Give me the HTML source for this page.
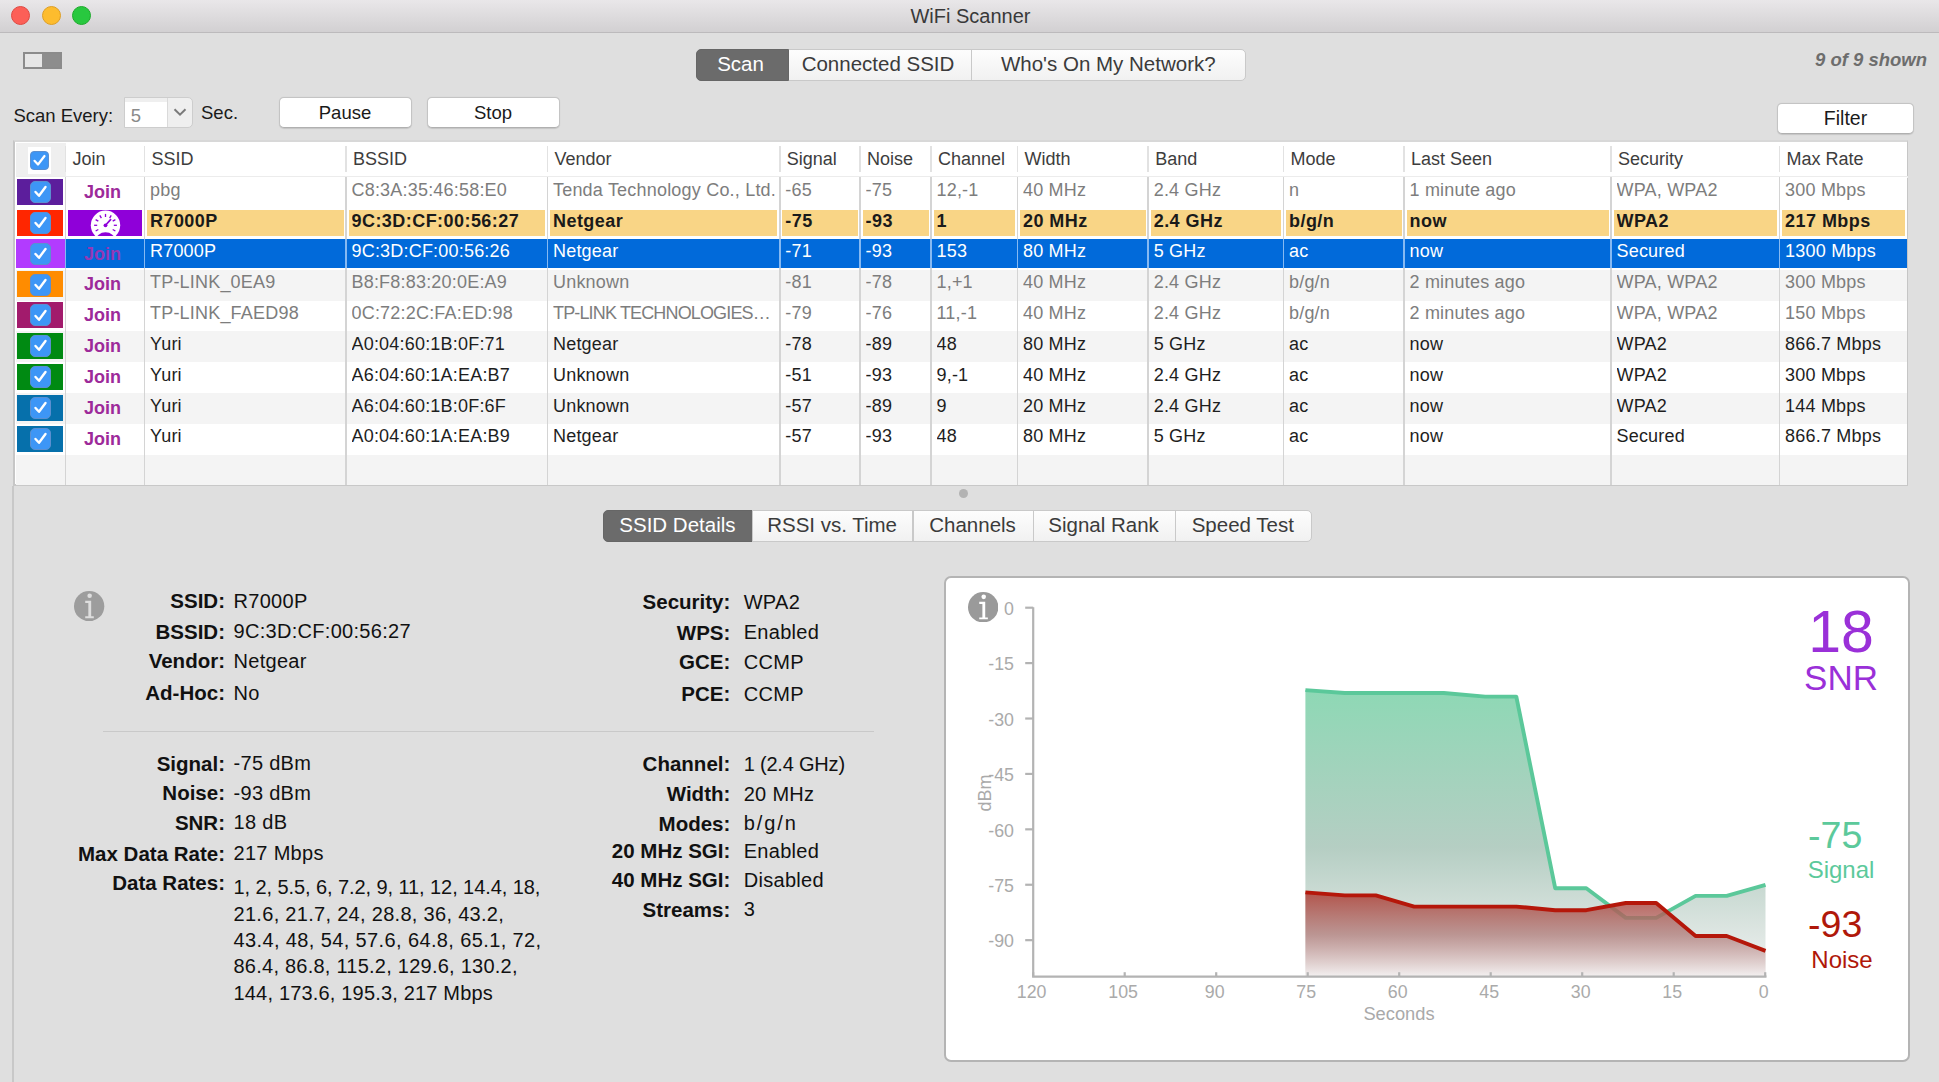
<!DOCTYPE html>
<html><head><meta charset="utf-8">
<style>
*{box-sizing:border-box;margin:0;padding:0}
html,body{width:1939px;height:1082px;overflow:hidden;background:#dfdfdf;font-family:"Liberation Sans",sans-serif;color:#1a1a1a}
.a{position:absolute;white-space:nowrap}
.b{position:absolute}
#titlebar{position:absolute;left:0;top:0;width:1939px;height:33px;background:linear-gradient(#e9e7e9,#d2d0d2);border-bottom:1.5px solid #bcbabc}
.tl{position:absolute;top:6px;width:19px;height:19px;border-radius:50%}
.seg{position:absolute;height:32px;border:1px solid #c9c9c9;background:linear-gradient(#fdfdfd,#f1f1f1)}
.seg.on{background:#6b6b6b;border-color:#666}
.btn{position:absolute;height:31px;border:1px solid #c4c4c4;border-bottom-color:#b0b0b0;background:#fff;border-radius:5px;box-shadow:0 0.5px 1px rgba(0,0,0,0.12)}
.cb{position:absolute;width:21px;height:21px;border-radius:5px;background:#3d96f6;border:1px solid #5b8fd0}
.vd{position:absolute;width:1.5px;background:#d2d2d2}
</style></head><body>

<div id="titlebar">
<div class="tl" style="left:11px;background:#fc5f57;border:1px solid #df4942"></div>
<div class="tl" style="left:41.5px;background:#fdbc2e;border:1px solid #de9f24"></div>
<div class="tl" style="left:72px;background:#28c83f;border:1px solid #1eaa2c"></div>
</div>
<div class="a" style="left:670.50px;width:600px;text-align:center;top:3.67px;font-size:20px;line-height:25px;color:#393939;">WiFi Scanner</div>
<div class="b" style="left:23px;top:52px;width:39px;height:17px;border:2px solid #8b8b8b;background:linear-gradient(90deg,#e6e6e6 0,#e6e6e6 50%,#8d8d8d 50%)"></div>
<div class="seg on" style="left:696px;top:49px;width:93px;height:32px;border-radius:5px 0 0 5px"></div>
<div class="seg" style="left:788.5px;top:49px;width:183px;height:32px;border-left:none"></div>
<div class="seg" style="left:970.5px;top:49px;width:275px;height:32px;border-radius:0 5px 5px 0"></div>
<div class="a" style="left:440.50px;width:600px;text-align:center;top:51.30px;font-size:20.5px;line-height:26px;color:#fff;">Scan</div>
<div class="a" style="left:578.00px;width:600px;text-align:center;top:51.10px;font-size:20.5px;line-height:26px;color:#3b3b3b;">Connected SSID</div>
<div class="a" style="left:808.30px;width:600px;text-align:center;top:51.10px;font-size:20.5px;line-height:26px;color:#3b3b3b;">Who's On My Network?</div>
<div class="a" style="right:12.00px;top:48.39px;font-size:18.5px;line-height:23px;font-weight:bold;color:#6d6d6d;font-style:italic;">9 of 9 shown</div>
<div class="a" style="left:13.40px;top:103.59px;font-size:18.5px;line-height:23px;">Scan Every:</div>
<div class="b" style="left:124px;top:97px;width:69px;height:31px;border:1px solid #cdcdcd;border-radius:0 5px 5px 0;background:#efefef"></div>
<div class="b" style="left:125px;top:102px;width:41.5px;height:25px;background:#fff"></div>
<div class="b" style="left:166.5px;top:98px;width:1px;height:29px;background:#dadada"></div>
<div class="a" style="left:130.70px;top:103.59px;font-size:18.5px;line-height:23px;color:#8a8a8a;">5</div>
<svg class="a" style="left:172px;top:106px" width="16" height="12"><path d="M2.5 3.2 L8 8.6 L13.5 3.2" fill="none" stroke="#7a7a7a" stroke-width="2"/></svg>
<div class="a" style="left:201.00px;top:100.89px;font-size:18.5px;line-height:23px;">Sec.</div>
<div class="btn" style="left:278.5px;top:96.5px;width:133px;height:31px"></div>
<div class="btn" style="left:426.5px;top:96.5px;width:133px;height:31px"></div>
<div class="btn" style="left:1777px;top:103px;width:137px;height:30.5px"></div>
<div class="a" style="left:45.00px;width:600px;text-align:center;top:100.69px;font-size:18.5px;line-height:23px;">Pause</div>
<div class="a" style="left:193.00px;width:600px;text-align:center;top:100.69px;font-size:18.5px;line-height:23px;">Stop</div>
<div class="a" style="left:1545.50px;width:600px;text-align:center;top:105.84px;font-size:19.5px;line-height:24px;">Filter</div>
<div class="b" style="left:13px;top:140.3px;width:1895px;height:345.7px;background:#fff;border-left:2.8px solid #c6c6c6;border-top:2px solid #d8d8d8;border-bottom:2px solid #c8c8c8;border-right:1.5px solid #c6c6c6"></div>
<div class="b" style="left:16px;top:143px;width:49.5px;height:33px;background:#efefef"></div>
<div class="b" style="left:28px;top:147px;width:23px;height:27px;background:#fff"></div>
<div class="cb" style="left:29.5px;top:151px;width:19px;height:19px;border-radius:4px"></div>
<svg class="a" style="left:29.5px;top:151px" width="19" height="19"><path d="M4.5 9.8 L8 13.5 L14.5 5" fill="none" stroke="#fff" stroke-width="2.2" stroke-linecap="round" stroke-linejoin="round"/></svg>
<div class="b" style="left:16px;top:176px;width:1892px;height:1.5px;background:#ececec"></div>
<div class="b" style="left:16px;top:177.10px;width:1890.5px;height:30.86px;background:#ffffff"></div>
<div class="b" style="left:16px;top:207.96px;width:1890.5px;height:30.86px;background:#ffffff"></div>
<div class="b" style="left:16px;top:238.82px;width:1890.5px;height:30.86px;background:#ffffff"></div>
<div class="b" style="left:16px;top:239.22px;width:1890.5px;height:28.66px;background:#016ada"></div>
<div class="b" style="left:16px;top:269.68px;width:1890.5px;height:30.86px;background:#f4f4f4"></div>
<div class="b" style="left:16px;top:300.54px;width:1890.5px;height:30.86px;background:#ffffff"></div>
<div class="b" style="left:16px;top:331.40px;width:1890.5px;height:30.86px;background:#f4f4f4"></div>
<div class="b" style="left:16px;top:362.26px;width:1890.5px;height:30.86px;background:#ffffff"></div>
<div class="b" style="left:16px;top:393.12px;width:1890.5px;height:30.86px;background:#f4f4f4"></div>
<div class="b" style="left:16px;top:423.98px;width:1890.5px;height:30.86px;background:#ffffff"></div>
<div class="b" style="left:16px;top:454.84px;width:1890.5px;height:30.16px;background:#f4f4f4"></div>
<div class="vd" style="left:64.75px;top:177px;height:308px;background:#d4d4d4"></div>
<div class="vd" style="left:64.75px;top:146px;height:26px;background:#e2e2e2"></div>
<div class="vd" style="left:143.75px;top:177px;height:308px;background:#d4d4d4"></div>
<div class="vd" style="left:143.75px;top:146px;height:26px;background:#e2e2e2"></div>
<div class="vd" style="left:345.25px;top:177px;height:308px;background:#d4d4d4"></div>
<div class="vd" style="left:345.25px;top:146px;height:26px;background:#e2e2e2"></div>
<div class="vd" style="left:546.75px;top:177px;height:308px;background:#d4d4d4"></div>
<div class="vd" style="left:546.75px;top:146px;height:26px;background:#e2e2e2"></div>
<div class="vd" style="left:779.00px;top:177px;height:308px;background:#d4d4d4"></div>
<div class="vd" style="left:779.00px;top:146px;height:26px;background:#e2e2e2"></div>
<div class="vd" style="left:859.25px;top:177px;height:308px;background:#d4d4d4"></div>
<div class="vd" style="left:859.25px;top:146px;height:26px;background:#e2e2e2"></div>
<div class="vd" style="left:930.25px;top:177px;height:308px;background:#d4d4d4"></div>
<div class="vd" style="left:930.25px;top:146px;height:26px;background:#e2e2e2"></div>
<div class="vd" style="left:1016.75px;top:177px;height:308px;background:#d4d4d4"></div>
<div class="vd" style="left:1016.75px;top:146px;height:26px;background:#e2e2e2"></div>
<div class="vd" style="left:1147.45px;top:177px;height:308px;background:#d4d4d4"></div>
<div class="vd" style="left:1147.45px;top:146px;height:26px;background:#e2e2e2"></div>
<div class="vd" style="left:1282.75px;top:177px;height:308px;background:#d4d4d4"></div>
<div class="vd" style="left:1282.75px;top:146px;height:26px;background:#e2e2e2"></div>
<div class="vd" style="left:1403.25px;top:177px;height:308px;background:#d4d4d4"></div>
<div class="vd" style="left:1403.25px;top:146px;height:26px;background:#e2e2e2"></div>
<div class="vd" style="left:1610.25px;top:177px;height:308px;background:#d4d4d4"></div>
<div class="vd" style="left:1610.25px;top:146px;height:26px;background:#e2e2e2"></div>
<div class="vd" style="left:1778.85px;top:177px;height:308px;background:#d4d4d4"></div>
<div class="vd" style="left:1778.85px;top:146px;height:26px;background:#e2e2e2"></div>
<div class="vd" style="left:64.75px;top:239.22px;height:28.66px;background:#86b9f2"></div>
<div class="vd" style="left:143.75px;top:239.22px;height:28.66px;background:#86b9f2"></div>
<div class="vd" style="left:345.25px;top:239.22px;height:28.66px;background:#86b9f2"></div>
<div class="vd" style="left:546.75px;top:239.22px;height:28.66px;background:#86b9f2"></div>
<div class="vd" style="left:779.00px;top:239.22px;height:28.66px;background:#86b9f2"></div>
<div class="vd" style="left:859.25px;top:239.22px;height:28.66px;background:#86b9f2"></div>
<div class="vd" style="left:930.25px;top:239.22px;height:28.66px;background:#86b9f2"></div>
<div class="vd" style="left:1016.75px;top:239.22px;height:28.66px;background:#86b9f2"></div>
<div class="vd" style="left:1147.45px;top:239.22px;height:28.66px;background:#86b9f2"></div>
<div class="vd" style="left:1282.75px;top:239.22px;height:28.66px;background:#86b9f2"></div>
<div class="vd" style="left:1403.25px;top:239.22px;height:28.66px;background:#86b9f2"></div>
<div class="vd" style="left:1610.25px;top:239.22px;height:28.66px;background:#86b9f2"></div>
<div class="vd" style="left:1778.85px;top:239.22px;height:28.66px;background:#86b9f2"></div>
<div class="a" style="left:72.50px;top:147.66px;font-size:18px;line-height:22px;color:#3d3d3d;">Join</div>
<div class="a" style="left:151.50px;top:147.66px;font-size:18px;line-height:22px;color:#3d3d3d;">SSID</div>
<div class="a" style="left:353.00px;top:147.66px;font-size:18px;line-height:22px;color:#3d3d3d;">BSSID</div>
<div class="a" style="left:554.50px;top:147.66px;font-size:18px;line-height:22px;color:#3d3d3d;">Vendor</div>
<div class="a" style="left:786.75px;top:147.66px;font-size:18px;line-height:22px;color:#3d3d3d;">Signal</div>
<div class="a" style="left:867.00px;top:147.66px;font-size:18px;line-height:22px;color:#3d3d3d;">Noise</div>
<div class="a" style="left:938.00px;top:147.66px;font-size:18px;line-height:22px;color:#3d3d3d;">Channel</div>
<div class="a" style="left:1024.50px;top:147.66px;font-size:18px;line-height:22px;color:#3d3d3d;">Width</div>
<div class="a" style="left:1155.20px;top:147.66px;font-size:18px;line-height:22px;color:#3d3d3d;">Band</div>
<div class="a" style="left:1290.50px;top:147.66px;font-size:18px;line-height:22px;color:#3d3d3d;">Mode</div>
<div class="a" style="left:1411.00px;top:147.66px;font-size:18px;line-height:22px;color:#3d3d3d;">Last Seen</div>
<div class="a" style="left:1618.00px;top:147.66px;font-size:18px;line-height:22px;color:#3d3d3d;">Security</div>
<div class="a" style="left:1786.60px;top:147.66px;font-size:18px;line-height:22px;color:#3d3d3d;">Max Rate</div>
<div class="b" style="left:17px;top:178.85px;width:46px;height:25.96px;background:#5c1e9c"></div>
<div class="cb" style="left:29.5px;top:181.00px;height:22px"></div>
<svg class="a" style="left:29.5px;top:181.10px" width="21" height="21"><path d="M5.5 11 L9 14.8 L15.5 6" fill="none" stroke="#fff" stroke-width="2.4" stroke-linecap="round" stroke-linejoin="round"/></svg>
<div class="a" style="left:-197.50px;width:600px;text-align:center;top:180.86px;font-size:18px;line-height:22px;font-weight:bold;color:#9d2a9a;">Join</div>
<div class="a" style="left:150.00px;top:178.56px;font-size:18px;line-height:22px;color:#7d7d7d;letter-spacing:0.2px;width:193.5px;overflow:hidden;">pbg</div>
<div class="a" style="left:351.50px;top:178.56px;font-size:18px;line-height:22px;color:#7d7d7d;letter-spacing:0.2px;width:193.5px;overflow:hidden;">C8:3A:35:46:58:E0</div>
<div class="a" style="left:553.00px;top:178.56px;font-size:18px;line-height:22px;color:#7d7d7d;letter-spacing:0.2px;width:224.2px;overflow:hidden;">Tenda Technology Co., Ltd.</div>
<div class="a" style="left:785.25px;top:178.56px;font-size:18px;line-height:22px;color:#7d7d7d;letter-spacing:0.2px;width:72.2px;overflow:hidden;">-65</div>
<div class="a" style="left:865.50px;top:178.56px;font-size:18px;line-height:22px;color:#7d7d7d;letter-spacing:0.2px;width:63.0px;overflow:hidden;">-75</div>
<div class="a" style="left:936.50px;top:178.56px;font-size:18px;line-height:22px;color:#7d7d7d;letter-spacing:0.2px;width:78.5px;overflow:hidden;">12,-1</div>
<div class="a" style="left:1023.00px;top:178.56px;font-size:18px;line-height:22px;color:#7d7d7d;letter-spacing:0.2px;width:122.7px;overflow:hidden;">40 MHz</div>
<div class="a" style="left:1153.70px;top:178.56px;font-size:18px;line-height:22px;color:#7d7d7d;letter-spacing:0.2px;width:127.3px;overflow:hidden;">2.4 GHz</div>
<div class="a" style="left:1289.00px;top:178.56px;font-size:18px;line-height:22px;color:#7d7d7d;letter-spacing:0.2px;width:112.5px;overflow:hidden;">n</div>
<div class="a" style="left:1409.50px;top:178.56px;font-size:18px;line-height:22px;color:#7d7d7d;letter-spacing:0.2px;width:199.0px;overflow:hidden;">1 minute ago</div>
<div class="a" style="left:1616.50px;top:178.56px;font-size:18px;line-height:22px;color:#7d7d7d;letter-spacing:0.2px;width:160.6px;overflow:hidden;">WPA, WPA2</div>
<div class="a" style="left:1785.10px;top:178.56px;font-size:18px;line-height:22px;color:#7d7d7d;letter-spacing:0.2px;width:120.4px;overflow:hidden;">300 Mbps</div>
<div class="b" style="left:17px;top:209.71px;width:46px;height:25.96px;background:#ff2600"></div>
<div class="cb" style="left:29.5px;top:211.86px;height:22px"></div>
<svg class="a" style="left:29.5px;top:211.96px" width="21" height="21"><path d="M5.5 11 L9 14.8 L15.5 6" fill="none" stroke="#fff" stroke-width="2.4" stroke-linecap="round" stroke-linejoin="round"/></svg>
<div class="b" style="left:68.00px;top:209.76px;width:74.00px;height:26.26px;background:#8f00d9"></div>
<div class="b" style="left:147.00px;top:209.76px;width:196.50px;height:26.26px;background:#f9d586"></div>
<div class="b" style="left:348.50px;top:209.76px;width:196.50px;height:26.26px;background:#f9d586"></div>
<div class="b" style="left:550.00px;top:209.76px;width:227.25px;height:26.26px;background:#f9d586"></div>
<div class="b" style="left:782.25px;top:209.76px;width:75.25px;height:26.26px;background:#f9d586"></div>
<div class="b" style="left:862.50px;top:209.76px;width:66.00px;height:26.26px;background:#f9d586"></div>
<div class="b" style="left:933.50px;top:209.76px;width:81.50px;height:26.26px;background:#f9d586"></div>
<div class="b" style="left:1020.00px;top:209.76px;width:125.70px;height:26.26px;background:#f9d586"></div>
<div class="b" style="left:1150.70px;top:209.76px;width:130.30px;height:26.26px;background:#f9d586"></div>
<div class="b" style="left:1286.00px;top:209.76px;width:115.50px;height:26.26px;background:#f9d586"></div>
<div class="b" style="left:1406.50px;top:209.76px;width:202.00px;height:26.26px;background:#f9d586"></div>
<div class="b" style="left:1613.50px;top:209.76px;width:163.60px;height:26.26px;background:#f9d586"></div>
<div class="b" style="left:1782.10px;top:209.76px;width:123.40px;height:26.26px;background:#f9d586"></div>
<svg class="a" style="left:66px;top:209.76px" width="80" height="26.26" viewBox="66 209.76 80 26.26"><circle cx="105.5" cy="225.06" r="14.7" fill="#fff"/><ellipse cx="105.5" cy="240.06" rx="9.6" ry="8" fill="#8f00d9"/><line x1="112.69" y1="229.21" x2="115.37" y2="230.76" stroke="#8f00d9" stroke-width="1.3"/><line x1="113.80" y1="225.06" x2="116.90" y2="225.06" stroke="#8f00d9" stroke-width="1.3"/><line x1="112.69" y1="220.91" x2="115.37" y2="219.36" stroke="#8f00d9" stroke-width="1.3"/><line x1="109.65" y1="217.87" x2="111.20" y2="215.19" stroke="#8f00d9" stroke-width="1.3"/><line x1="105.50" y1="216.76" x2="105.50" y2="213.66" stroke="#8f00d9" stroke-width="1.3"/><line x1="101.35" y1="217.87" x2="99.80" y2="215.19" stroke="#8f00d9" stroke-width="1.3"/><line x1="98.31" y1="220.91" x2="95.63" y2="219.36" stroke="#8f00d9" stroke-width="1.3"/><line x1="97.20" y1="225.06" x2="94.10" y2="225.06" stroke="#8f00d9" stroke-width="1.3"/><line x1="98.31" y1="229.21" x2="95.63" y2="230.76" stroke="#8f00d9" stroke-width="1.3"/><line x1="105.5" y1="225.06" x2="110.59" y2="219.41" stroke="#8f00d9" stroke-width="1.7" stroke-linecap="round"/><circle cx="105.5" cy="225.06" r="1.9" fill="#8f00d9"/></svg>
<div class="a" style="left:150.00px;top:210.42px;font-size:18px;line-height:22px;font-weight:bold;color:#1a1a1a;letter-spacing:0.45px;width:193.5px;overflow:hidden;">R7000P</div>
<div class="a" style="left:351.50px;top:210.42px;font-size:18px;line-height:22px;font-weight:bold;color:#1a1a1a;letter-spacing:0.45px;width:193.5px;overflow:hidden;">9C:3D:CF:00:56:27</div>
<div class="a" style="left:553.00px;top:210.42px;font-size:18px;line-height:22px;font-weight:bold;color:#1a1a1a;letter-spacing:0.45px;width:224.2px;overflow:hidden;">Netgear</div>
<div class="a" style="left:785.25px;top:210.42px;font-size:18px;line-height:22px;font-weight:bold;color:#1a1a1a;letter-spacing:0.45px;width:72.2px;overflow:hidden;">-75</div>
<div class="a" style="left:865.50px;top:210.42px;font-size:18px;line-height:22px;font-weight:bold;color:#1a1a1a;letter-spacing:0.45px;width:63.0px;overflow:hidden;">-93</div>
<div class="a" style="left:936.50px;top:210.42px;font-size:18px;line-height:22px;font-weight:bold;color:#1a1a1a;letter-spacing:0.45px;width:78.5px;overflow:hidden;">1</div>
<div class="a" style="left:1023.00px;top:210.42px;font-size:18px;line-height:22px;font-weight:bold;color:#1a1a1a;letter-spacing:0.45px;width:122.7px;overflow:hidden;">20 MHz</div>
<div class="a" style="left:1153.70px;top:210.42px;font-size:18px;line-height:22px;font-weight:bold;color:#1a1a1a;letter-spacing:0.45px;width:127.3px;overflow:hidden;">2.4 GHz</div>
<div class="a" style="left:1289.00px;top:210.42px;font-size:18px;line-height:22px;font-weight:bold;color:#1a1a1a;letter-spacing:0.45px;width:112.5px;overflow:hidden;">b/g/n</div>
<div class="a" style="left:1409.50px;top:210.42px;font-size:18px;line-height:22px;font-weight:bold;color:#1a1a1a;letter-spacing:0.45px;width:199.0px;overflow:hidden;">now</div>
<div class="a" style="left:1616.50px;top:210.42px;font-size:18px;line-height:22px;font-weight:bold;color:#1a1a1a;letter-spacing:0.45px;width:160.6px;overflow:hidden;">WPA2</div>
<div class="a" style="left:1785.10px;top:210.42px;font-size:18px;line-height:22px;font-weight:bold;color:#1a1a1a;letter-spacing:0.45px;width:120.4px;overflow:hidden;">217 Mbps</div>
<div class="b" style="left:16px;top:239.22px;width:49px;height:28.66px;background:#b23bff"></div>
<div class="cb" style="left:29.5px;top:242.72px;height:22px"></div>
<svg class="a" style="left:29.5px;top:242.82px" width="21" height="21"><path d="M5.5 11 L9 14.8 L15.5 6" fill="none" stroke="#fff" stroke-width="2.4" stroke-linecap="round" stroke-linejoin="round"/></svg>
<div class="a" style="left:-197.50px;width:600px;text-align:center;top:242.58px;font-size:18px;line-height:22px;font-weight:bold;color:#9339b6;">Join</div>
<div class="a" style="left:150.00px;top:240.28px;font-size:18px;line-height:22px;color:#ffffff;letter-spacing:0.2px;width:193.5px;overflow:hidden;">R7000P</div>
<div class="a" style="left:351.50px;top:240.28px;font-size:18px;line-height:22px;color:#ffffff;letter-spacing:0.2px;width:193.5px;overflow:hidden;">9C:3D:CF:00:56:26</div>
<div class="a" style="left:553.00px;top:240.28px;font-size:18px;line-height:22px;color:#ffffff;letter-spacing:0.2px;width:224.2px;overflow:hidden;">Netgear</div>
<div class="a" style="left:785.25px;top:240.28px;font-size:18px;line-height:22px;color:#ffffff;letter-spacing:0.2px;width:72.2px;overflow:hidden;">-71</div>
<div class="a" style="left:865.50px;top:240.28px;font-size:18px;line-height:22px;color:#ffffff;letter-spacing:0.2px;width:63.0px;overflow:hidden;">-93</div>
<div class="a" style="left:936.50px;top:240.28px;font-size:18px;line-height:22px;color:#ffffff;letter-spacing:0.2px;width:78.5px;overflow:hidden;">153</div>
<div class="a" style="left:1023.00px;top:240.28px;font-size:18px;line-height:22px;color:#ffffff;letter-spacing:0.2px;width:122.7px;overflow:hidden;">80 MHz</div>
<div class="a" style="left:1153.70px;top:240.28px;font-size:18px;line-height:22px;color:#ffffff;letter-spacing:0.2px;width:127.3px;overflow:hidden;">5 GHz</div>
<div class="a" style="left:1289.00px;top:240.28px;font-size:18px;line-height:22px;color:#ffffff;letter-spacing:0.2px;width:112.5px;overflow:hidden;">ac</div>
<div class="a" style="left:1409.50px;top:240.28px;font-size:18px;line-height:22px;color:#ffffff;letter-spacing:0.2px;width:199.0px;overflow:hidden;">now</div>
<div class="a" style="left:1616.50px;top:240.28px;font-size:18px;line-height:22px;color:#ffffff;letter-spacing:0.2px;width:160.6px;overflow:hidden;">Secured</div>
<div class="a" style="left:1785.10px;top:240.28px;font-size:18px;line-height:22px;color:#ffffff;letter-spacing:0.2px;width:120.4px;overflow:hidden;">1300 Mbps</div>
<div class="b" style="left:17px;top:271.43px;width:46px;height:25.96px;background:#ff8c00"></div>
<div class="cb" style="left:29.5px;top:273.58px;height:22px"></div>
<svg class="a" style="left:29.5px;top:273.68px" width="21" height="21"><path d="M5.5 11 L9 14.8 L15.5 6" fill="none" stroke="#fff" stroke-width="2.4" stroke-linecap="round" stroke-linejoin="round"/></svg>
<div class="a" style="left:-197.50px;width:600px;text-align:center;top:273.44px;font-size:18px;line-height:22px;font-weight:bold;color:#9d2a9a;">Join</div>
<div class="a" style="left:150.00px;top:271.14px;font-size:18px;line-height:22px;color:#7d7d7d;letter-spacing:0.2px;width:193.5px;overflow:hidden;">TP-LINK_0EA9</div>
<div class="a" style="left:351.50px;top:271.14px;font-size:18px;line-height:22px;color:#7d7d7d;letter-spacing:0.2px;width:193.5px;overflow:hidden;">B8:F8:83:20:0E:A9</div>
<div class="a" style="left:553.00px;top:271.14px;font-size:18px;line-height:22px;color:#7d7d7d;letter-spacing:0.2px;width:224.2px;overflow:hidden;">Unknown</div>
<div class="a" style="left:785.25px;top:271.14px;font-size:18px;line-height:22px;color:#7d7d7d;letter-spacing:0.2px;width:72.2px;overflow:hidden;">-81</div>
<div class="a" style="left:865.50px;top:271.14px;font-size:18px;line-height:22px;color:#7d7d7d;letter-spacing:0.2px;width:63.0px;overflow:hidden;">-78</div>
<div class="a" style="left:936.50px;top:271.14px;font-size:18px;line-height:22px;color:#7d7d7d;letter-spacing:0.2px;width:78.5px;overflow:hidden;">1,+1</div>
<div class="a" style="left:1023.00px;top:271.14px;font-size:18px;line-height:22px;color:#7d7d7d;letter-spacing:0.2px;width:122.7px;overflow:hidden;">40 MHz</div>
<div class="a" style="left:1153.70px;top:271.14px;font-size:18px;line-height:22px;color:#7d7d7d;letter-spacing:0.2px;width:127.3px;overflow:hidden;">2.4 GHz</div>
<div class="a" style="left:1289.00px;top:271.14px;font-size:18px;line-height:22px;color:#7d7d7d;letter-spacing:0.2px;width:112.5px;overflow:hidden;">b/g/n</div>
<div class="a" style="left:1409.50px;top:271.14px;font-size:18px;line-height:22px;color:#7d7d7d;letter-spacing:0.2px;width:199.0px;overflow:hidden;">2 minutes ago</div>
<div class="a" style="left:1616.50px;top:271.14px;font-size:18px;line-height:22px;color:#7d7d7d;letter-spacing:0.2px;width:160.6px;overflow:hidden;">WPA, WPA2</div>
<div class="a" style="left:1785.10px;top:271.14px;font-size:18px;line-height:22px;color:#7d7d7d;letter-spacing:0.2px;width:120.4px;overflow:hidden;">300 Mbps</div>
<div class="b" style="left:17px;top:302.29px;width:46px;height:25.96px;background:#a21b6c"></div>
<div class="cb" style="left:29.5px;top:304.44px;height:22px"></div>
<svg class="a" style="left:29.5px;top:304.54px" width="21" height="21"><path d="M5.5 11 L9 14.8 L15.5 6" fill="none" stroke="#fff" stroke-width="2.4" stroke-linecap="round" stroke-linejoin="round"/></svg>
<div class="a" style="left:-197.50px;width:600px;text-align:center;top:304.30px;font-size:18px;line-height:22px;font-weight:bold;color:#9d2a9a;">Join</div>
<div class="a" style="left:150.00px;top:302.00px;font-size:18px;line-height:22px;color:#7d7d7d;letter-spacing:0.2px;width:193.5px;overflow:hidden;">TP-LINK_FAED98</div>
<div class="a" style="left:351.50px;top:302.00px;font-size:18px;line-height:22px;color:#7d7d7d;letter-spacing:0.2px;width:193.5px;overflow:hidden;">0C:72:2C:FA:ED:98</div>
<div class="a" style="left:553.00px;top:302.00px;font-size:18px;line-height:22px;color:#7d7d7d;letter-spacing:-0.85px;width:224.2px;overflow:hidden;">TP-LINK TECHNOLOGIES…</div>
<div class="a" style="left:785.25px;top:302.00px;font-size:18px;line-height:22px;color:#7d7d7d;letter-spacing:0.2px;width:72.2px;overflow:hidden;">-79</div>
<div class="a" style="left:865.50px;top:302.00px;font-size:18px;line-height:22px;color:#7d7d7d;letter-spacing:0.2px;width:63.0px;overflow:hidden;">-76</div>
<div class="a" style="left:936.50px;top:302.00px;font-size:18px;line-height:22px;color:#7d7d7d;letter-spacing:0.2px;width:78.5px;overflow:hidden;">11,-1</div>
<div class="a" style="left:1023.00px;top:302.00px;font-size:18px;line-height:22px;color:#7d7d7d;letter-spacing:0.2px;width:122.7px;overflow:hidden;">40 MHz</div>
<div class="a" style="left:1153.70px;top:302.00px;font-size:18px;line-height:22px;color:#7d7d7d;letter-spacing:0.2px;width:127.3px;overflow:hidden;">2.4 GHz</div>
<div class="a" style="left:1289.00px;top:302.00px;font-size:18px;line-height:22px;color:#7d7d7d;letter-spacing:0.2px;width:112.5px;overflow:hidden;">b/g/n</div>
<div class="a" style="left:1409.50px;top:302.00px;font-size:18px;line-height:22px;color:#7d7d7d;letter-spacing:0.2px;width:199.0px;overflow:hidden;">2 minutes ago</div>
<div class="a" style="left:1616.50px;top:302.00px;font-size:18px;line-height:22px;color:#7d7d7d;letter-spacing:0.2px;width:160.6px;overflow:hidden;">WPA, WPA2</div>
<div class="a" style="left:1785.10px;top:302.00px;font-size:18px;line-height:22px;color:#7d7d7d;letter-spacing:0.2px;width:120.4px;overflow:hidden;">150 Mbps</div>
<div class="b" style="left:17px;top:333.15px;width:46px;height:25.96px;background:#008a12"></div>
<div class="cb" style="left:29.5px;top:335.30px;height:22px"></div>
<svg class="a" style="left:29.5px;top:335.40px" width="21" height="21"><path d="M5.5 11 L9 14.8 L15.5 6" fill="none" stroke="#fff" stroke-width="2.4" stroke-linecap="round" stroke-linejoin="round"/></svg>
<div class="a" style="left:-197.50px;width:600px;text-align:center;top:335.16px;font-size:18px;line-height:22px;font-weight:bold;color:#9d2a9a;">Join</div>
<div class="a" style="left:150.00px;top:332.86px;font-size:18px;line-height:22px;color:#1e1e1e;letter-spacing:0.2px;width:193.5px;overflow:hidden;">Yuri</div>
<div class="a" style="left:351.50px;top:332.86px;font-size:18px;line-height:22px;color:#1e1e1e;letter-spacing:0.2px;width:193.5px;overflow:hidden;">A0:04:60:1B:0F:71</div>
<div class="a" style="left:553.00px;top:332.86px;font-size:18px;line-height:22px;color:#1e1e1e;letter-spacing:0.2px;width:224.2px;overflow:hidden;">Netgear</div>
<div class="a" style="left:785.25px;top:332.86px;font-size:18px;line-height:22px;color:#1e1e1e;letter-spacing:0.2px;width:72.2px;overflow:hidden;">-78</div>
<div class="a" style="left:865.50px;top:332.86px;font-size:18px;line-height:22px;color:#1e1e1e;letter-spacing:0.2px;width:63.0px;overflow:hidden;">-89</div>
<div class="a" style="left:936.50px;top:332.86px;font-size:18px;line-height:22px;color:#1e1e1e;letter-spacing:0.2px;width:78.5px;overflow:hidden;">48</div>
<div class="a" style="left:1023.00px;top:332.86px;font-size:18px;line-height:22px;color:#1e1e1e;letter-spacing:0.2px;width:122.7px;overflow:hidden;">80 MHz</div>
<div class="a" style="left:1153.70px;top:332.86px;font-size:18px;line-height:22px;color:#1e1e1e;letter-spacing:0.2px;width:127.3px;overflow:hidden;">5 GHz</div>
<div class="a" style="left:1289.00px;top:332.86px;font-size:18px;line-height:22px;color:#1e1e1e;letter-spacing:0.2px;width:112.5px;overflow:hidden;">ac</div>
<div class="a" style="left:1409.50px;top:332.86px;font-size:18px;line-height:22px;color:#1e1e1e;letter-spacing:0.2px;width:199.0px;overflow:hidden;">now</div>
<div class="a" style="left:1616.50px;top:332.86px;font-size:18px;line-height:22px;color:#1e1e1e;letter-spacing:0.2px;width:160.6px;overflow:hidden;">WPA2</div>
<div class="a" style="left:1785.10px;top:332.86px;font-size:18px;line-height:22px;color:#1e1e1e;letter-spacing:0.2px;width:120.4px;overflow:hidden;">866.7 Mbps</div>
<div class="b" style="left:17px;top:364.01px;width:46px;height:25.96px;background:#008a12"></div>
<div class="cb" style="left:29.5px;top:366.16px;height:22px"></div>
<svg class="a" style="left:29.5px;top:366.26px" width="21" height="21"><path d="M5.5 11 L9 14.8 L15.5 6" fill="none" stroke="#fff" stroke-width="2.4" stroke-linecap="round" stroke-linejoin="round"/></svg>
<div class="a" style="left:-197.50px;width:600px;text-align:center;top:366.02px;font-size:18px;line-height:22px;font-weight:bold;color:#9d2a9a;">Join</div>
<div class="a" style="left:150.00px;top:363.72px;font-size:18px;line-height:22px;color:#1e1e1e;letter-spacing:0.2px;width:193.5px;overflow:hidden;">Yuri</div>
<div class="a" style="left:351.50px;top:363.72px;font-size:18px;line-height:22px;color:#1e1e1e;letter-spacing:0.2px;width:193.5px;overflow:hidden;">A6:04:60:1A:EA:B7</div>
<div class="a" style="left:553.00px;top:363.72px;font-size:18px;line-height:22px;color:#1e1e1e;letter-spacing:0.2px;width:224.2px;overflow:hidden;">Unknown</div>
<div class="a" style="left:785.25px;top:363.72px;font-size:18px;line-height:22px;color:#1e1e1e;letter-spacing:0.2px;width:72.2px;overflow:hidden;">-51</div>
<div class="a" style="left:865.50px;top:363.72px;font-size:18px;line-height:22px;color:#1e1e1e;letter-spacing:0.2px;width:63.0px;overflow:hidden;">-93</div>
<div class="a" style="left:936.50px;top:363.72px;font-size:18px;line-height:22px;color:#1e1e1e;letter-spacing:0.2px;width:78.5px;overflow:hidden;">9,-1</div>
<div class="a" style="left:1023.00px;top:363.72px;font-size:18px;line-height:22px;color:#1e1e1e;letter-spacing:0.2px;width:122.7px;overflow:hidden;">40 MHz</div>
<div class="a" style="left:1153.70px;top:363.72px;font-size:18px;line-height:22px;color:#1e1e1e;letter-spacing:0.2px;width:127.3px;overflow:hidden;">2.4 GHz</div>
<div class="a" style="left:1289.00px;top:363.72px;font-size:18px;line-height:22px;color:#1e1e1e;letter-spacing:0.2px;width:112.5px;overflow:hidden;">ac</div>
<div class="a" style="left:1409.50px;top:363.72px;font-size:18px;line-height:22px;color:#1e1e1e;letter-spacing:0.2px;width:199.0px;overflow:hidden;">now</div>
<div class="a" style="left:1616.50px;top:363.72px;font-size:18px;line-height:22px;color:#1e1e1e;letter-spacing:0.2px;width:160.6px;overflow:hidden;">WPA2</div>
<div class="a" style="left:1785.10px;top:363.72px;font-size:18px;line-height:22px;color:#1e1e1e;letter-spacing:0.2px;width:120.4px;overflow:hidden;">300 Mbps</div>
<div class="b" style="left:17px;top:394.87px;width:46px;height:25.96px;background:#0670ab"></div>
<div class="cb" style="left:29.5px;top:397.02px;height:22px"></div>
<svg class="a" style="left:29.5px;top:397.12px" width="21" height="21"><path d="M5.5 11 L9 14.8 L15.5 6" fill="none" stroke="#fff" stroke-width="2.4" stroke-linecap="round" stroke-linejoin="round"/></svg>
<div class="a" style="left:-197.50px;width:600px;text-align:center;top:396.88px;font-size:18px;line-height:22px;font-weight:bold;color:#9d2a9a;">Join</div>
<div class="a" style="left:150.00px;top:394.58px;font-size:18px;line-height:22px;color:#1e1e1e;letter-spacing:0.2px;width:193.5px;overflow:hidden;">Yuri</div>
<div class="a" style="left:351.50px;top:394.58px;font-size:18px;line-height:22px;color:#1e1e1e;letter-spacing:0.2px;width:193.5px;overflow:hidden;">A6:04:60:1B:0F:6F</div>
<div class="a" style="left:553.00px;top:394.58px;font-size:18px;line-height:22px;color:#1e1e1e;letter-spacing:0.2px;width:224.2px;overflow:hidden;">Unknown</div>
<div class="a" style="left:785.25px;top:394.58px;font-size:18px;line-height:22px;color:#1e1e1e;letter-spacing:0.2px;width:72.2px;overflow:hidden;">-57</div>
<div class="a" style="left:865.50px;top:394.58px;font-size:18px;line-height:22px;color:#1e1e1e;letter-spacing:0.2px;width:63.0px;overflow:hidden;">-89</div>
<div class="a" style="left:936.50px;top:394.58px;font-size:18px;line-height:22px;color:#1e1e1e;letter-spacing:0.2px;width:78.5px;overflow:hidden;">9</div>
<div class="a" style="left:1023.00px;top:394.58px;font-size:18px;line-height:22px;color:#1e1e1e;letter-spacing:0.2px;width:122.7px;overflow:hidden;">20 MHz</div>
<div class="a" style="left:1153.70px;top:394.58px;font-size:18px;line-height:22px;color:#1e1e1e;letter-spacing:0.2px;width:127.3px;overflow:hidden;">2.4 GHz</div>
<div class="a" style="left:1289.00px;top:394.58px;font-size:18px;line-height:22px;color:#1e1e1e;letter-spacing:0.2px;width:112.5px;overflow:hidden;">ac</div>
<div class="a" style="left:1409.50px;top:394.58px;font-size:18px;line-height:22px;color:#1e1e1e;letter-spacing:0.2px;width:199.0px;overflow:hidden;">now</div>
<div class="a" style="left:1616.50px;top:394.58px;font-size:18px;line-height:22px;color:#1e1e1e;letter-spacing:0.2px;width:160.6px;overflow:hidden;">WPA2</div>
<div class="a" style="left:1785.10px;top:394.58px;font-size:18px;line-height:22px;color:#1e1e1e;letter-spacing:0.2px;width:120.4px;overflow:hidden;">144 Mbps</div>
<div class="b" style="left:17px;top:425.73px;width:46px;height:25.96px;background:#0670ab"></div>
<div class="cb" style="left:29.5px;top:427.88px;height:22px"></div>
<svg class="a" style="left:29.5px;top:427.98px" width="21" height="21"><path d="M5.5 11 L9 14.8 L15.5 6" fill="none" stroke="#fff" stroke-width="2.4" stroke-linecap="round" stroke-linejoin="round"/></svg>
<div class="a" style="left:-197.50px;width:600px;text-align:center;top:427.74px;font-size:18px;line-height:22px;font-weight:bold;color:#9d2a9a;">Join</div>
<div class="a" style="left:150.00px;top:425.44px;font-size:18px;line-height:22px;color:#1e1e1e;letter-spacing:0.2px;width:193.5px;overflow:hidden;">Yuri</div>
<div class="a" style="left:351.50px;top:425.44px;font-size:18px;line-height:22px;color:#1e1e1e;letter-spacing:0.2px;width:193.5px;overflow:hidden;">A0:04:60:1A:EA:B9</div>
<div class="a" style="left:553.00px;top:425.44px;font-size:18px;line-height:22px;color:#1e1e1e;letter-spacing:0.2px;width:224.2px;overflow:hidden;">Netgear</div>
<div class="a" style="left:785.25px;top:425.44px;font-size:18px;line-height:22px;color:#1e1e1e;letter-spacing:0.2px;width:72.2px;overflow:hidden;">-57</div>
<div class="a" style="left:865.50px;top:425.44px;font-size:18px;line-height:22px;color:#1e1e1e;letter-spacing:0.2px;width:63.0px;overflow:hidden;">-93</div>
<div class="a" style="left:936.50px;top:425.44px;font-size:18px;line-height:22px;color:#1e1e1e;letter-spacing:0.2px;width:78.5px;overflow:hidden;">48</div>
<div class="a" style="left:1023.00px;top:425.44px;font-size:18px;line-height:22px;color:#1e1e1e;letter-spacing:0.2px;width:122.7px;overflow:hidden;">80 MHz</div>
<div class="a" style="left:1153.70px;top:425.44px;font-size:18px;line-height:22px;color:#1e1e1e;letter-spacing:0.2px;width:127.3px;overflow:hidden;">5 GHz</div>
<div class="a" style="left:1289.00px;top:425.44px;font-size:18px;line-height:22px;color:#1e1e1e;letter-spacing:0.2px;width:112.5px;overflow:hidden;">ac</div>
<div class="a" style="left:1409.50px;top:425.44px;font-size:18px;line-height:22px;color:#1e1e1e;letter-spacing:0.2px;width:199.0px;overflow:hidden;">now</div>
<div class="a" style="left:1616.50px;top:425.44px;font-size:18px;line-height:22px;color:#1e1e1e;letter-spacing:0.2px;width:160.6px;overflow:hidden;">Secured</div>
<div class="a" style="left:1785.10px;top:425.44px;font-size:18px;line-height:22px;color:#1e1e1e;letter-spacing:0.2px;width:120.4px;overflow:hidden;">866.7 Mbps</div>
<div class="b" style="left:959px;top:489px;width:9px;height:9px;border-radius:50%;background:#b3b3b3"></div>
<div class="b" style="left:12.2px;top:486px;width:2px;height:596px;background:#c8c8c8"></div>
<div class="seg on" style="left:603.20px;top:509.5px;width:149.50px;height:32px;border-radius:5px 0 0 5px;"></div>
<div class="seg" style="left:751.70px;top:509.5px;width:161.80px;height:32px;"></div>
<div class="seg" style="left:912.50px;top:509.5px;width:121.10px;height:32px;"></div>
<div class="seg" style="left:1032.60px;top:509.5px;width:143.00px;height:32px;"></div>
<div class="seg" style="left:1174.60px;top:509.5px;width:137.40px;height:32px;border-radius:0 5px 5px 0;"></div>
<div class="a" style="left:377.45px;width:600px;text-align:center;top:511.60px;font-size:20.5px;line-height:26px;color:#fff;">SSID Details</div>
<div class="a" style="left:532.10px;width:600px;text-align:center;top:511.60px;font-size:20.5px;line-height:26px;color:#3b3b3b;">RSSI vs. Time</div>
<div class="a" style="left:672.55px;width:600px;text-align:center;top:511.60px;font-size:20.5px;line-height:26px;color:#3b3b3b;">Channels</div>
<div class="a" style="left:803.60px;width:600px;text-align:center;top:511.60px;font-size:20.5px;line-height:26px;color:#3b3b3b;">Signal Rank</div>
<div class="a" style="left:942.80px;width:600px;text-align:center;top:511.60px;font-size:20.5px;line-height:26px;color:#3b3b3b;">Speed Test</div>
<svg class="a" style="left:74.25px;top:590.75px" width="30.3" height="30.3" viewBox="0 0 30 30"><circle cx="15" cy="15" r="15" fill="#9d9d9d"/><circle cx="15.5" cy="4.8" r="2.25" fill="#dedede"/><path d="M11.1 9.7 H17.0 V25.1 H19.6 V27.0 H11.1 V25.1 H14.2 V11.8 H11.1 Z" fill="#dedede"/></svg>
<div class="a" style="right:1714.00px;top:588.30px;font-size:20.5px;line-height:26px;font-weight:bold;color:#111;">SSID:</div>
<div class="a" style="left:233.50px;top:588.97px;font-size:20px;line-height:25px;color:#111;letter-spacing:0.3px;">R7000P</div>
<div class="a" style="right:1714.00px;top:618.70px;font-size:20.5px;line-height:26px;font-weight:bold;color:#111;">BSSID:</div>
<div class="a" style="left:233.50px;top:619.37px;font-size:20px;line-height:25px;color:#111;letter-spacing:0.3px;">9C:3D:CF:00:56:27</div>
<div class="a" style="right:1714.00px;top:648.10px;font-size:20.5px;line-height:26px;font-weight:bold;color:#111;">Vendor:</div>
<div class="a" style="left:233.50px;top:648.77px;font-size:20px;line-height:25px;color:#111;letter-spacing:0.3px;">Netgear</div>
<div class="a" style="right:1714.00px;top:679.90px;font-size:20.5px;line-height:26px;font-weight:bold;color:#111;">Ad-Hoc:</div>
<div class="a" style="left:233.50px;top:680.57px;font-size:20px;line-height:25px;color:#111;letter-spacing:0.3px;">No</div>
<div class="a" style="right:1714.00px;top:750.80px;font-size:20.5px;line-height:26px;font-weight:bold;color:#111;">Signal:</div>
<div class="a" style="left:233.50px;top:751.47px;font-size:20px;line-height:25px;color:#111;letter-spacing:0.3px;">-75 dBm</div>
<div class="a" style="right:1714.00px;top:780.30px;font-size:20.5px;line-height:26px;font-weight:bold;color:#111;">Noise:</div>
<div class="a" style="left:233.50px;top:780.97px;font-size:20px;line-height:25px;color:#111;letter-spacing:0.3px;">-93 dBm</div>
<div class="a" style="right:1714.00px;top:809.80px;font-size:20.5px;line-height:26px;font-weight:bold;color:#111;">SNR:</div>
<div class="a" style="left:233.50px;top:810.47px;font-size:20px;line-height:25px;color:#111;letter-spacing:0.3px;">18 dB</div>
<div class="a" style="right:1714.00px;top:840.60px;font-size:20.5px;line-height:26px;font-weight:bold;color:#111;">Max Data Rate:</div>
<div class="a" style="left:233.50px;top:841.27px;font-size:20px;line-height:25px;color:#111;letter-spacing:0.3px;">217 Mbps</div>
<div class="a" style="right:1714.00px;top:869.90px;font-size:20.5px;line-height:26px;font-weight:bold;color:#111;">Data Rates:</div>
<div class="a" style="left:233.50px;top:874.77px;font-size:20px;line-height:25px;color:#111;letter-spacing:-0.08px;">1, 2, 5.5, 6, 7.2, 9, 11, 12, 14.4, 18,</div>
<div class="a" style="left:233.50px;top:901.57px;font-size:20px;line-height:25px;color:#111;letter-spacing:0.3px;">21.6, 21.7, 24, 28.8, 36, 43.2,</div>
<div class="a" style="left:233.50px;top:928.37px;font-size:20px;line-height:25px;color:#111;letter-spacing:0.38px;">43.4, 48, 54, 57.6, 64.8, 65.1, 72,</div>
<div class="a" style="left:233.50px;top:953.77px;font-size:20px;line-height:25px;color:#111;letter-spacing:0.24px;">86.4, 86.8, 115.2, 129.6, 130.2,</div>
<div class="a" style="left:233.50px;top:980.57px;font-size:20px;line-height:25px;color:#111;letter-spacing:0.18px;">144, 173.6, 195.3, 217 Mbps</div>
<div class="a" style="right:1208.70px;top:589.00px;font-size:20.5px;line-height:26px;font-weight:bold;color:#111;">Security:</div>
<div class="a" style="left:743.70px;top:589.67px;font-size:20px;line-height:25px;color:#111;letter-spacing:0.3px;">WPA2</div>
<div class="a" style="right:1208.70px;top:619.80px;font-size:20.5px;line-height:26px;font-weight:bold;color:#111;">WPS:</div>
<div class="a" style="left:743.70px;top:620.47px;font-size:20px;line-height:25px;color:#111;letter-spacing:0.3px;">Enabled</div>
<div class="a" style="right:1208.70px;top:648.90px;font-size:20.5px;line-height:26px;font-weight:bold;color:#111;">GCE:</div>
<div class="a" style="left:743.70px;top:649.57px;font-size:20px;line-height:25px;color:#111;letter-spacing:0.3px;">CCMP</div>
<div class="a" style="right:1208.70px;top:681.30px;font-size:20.5px;line-height:26px;font-weight:bold;color:#111;">PCE:</div>
<div class="a" style="left:743.70px;top:681.97px;font-size:20px;line-height:25px;color:#111;letter-spacing:0.3px;">CCMP</div>
<div class="a" style="right:1208.70px;top:750.90px;font-size:20.5px;line-height:26px;font-weight:bold;color:#111;">Channel:</div>
<div class="a" style="left:743.70px;top:751.57px;font-size:20px;line-height:25px;color:#111;letter-spacing:-0.2px;">1 (2.4 GHz)</div>
<div class="a" style="right:1208.70px;top:780.90px;font-size:20.5px;line-height:26px;font-weight:bold;color:#111;">Width:</div>
<div class="a" style="left:743.70px;top:781.57px;font-size:20px;line-height:25px;color:#111;letter-spacing:0.3px;">20 MHz</div>
<div class="a" style="right:1208.70px;top:810.70px;font-size:20.5px;line-height:26px;font-weight:bold;color:#111;">Modes:</div>
<div class="a" style="left:743.70px;top:811.37px;font-size:20px;line-height:25px;color:#111;letter-spacing:1.9px;">b/g/n</div>
<div class="a" style="right:1208.70px;top:838.20px;font-size:20.5px;line-height:26px;font-weight:bold;color:#111;">20 MHz SGI:</div>
<div class="a" style="left:743.70px;top:838.87px;font-size:20px;line-height:25px;color:#111;letter-spacing:0.3px;">Enabled</div>
<div class="a" style="right:1208.70px;top:867.30px;font-size:20.5px;line-height:26px;font-weight:bold;color:#111;">40 MHz SGI:</div>
<div class="a" style="left:743.70px;top:867.97px;font-size:20px;line-height:25px;color:#111;letter-spacing:0.3px;">Disabled</div>
<div class="a" style="right:1208.70px;top:896.50px;font-size:20.5px;line-height:26px;font-weight:bold;color:#111;">Streams:</div>
<div class="a" style="left:743.70px;top:897.17px;font-size:20px;line-height:25px;color:#111;letter-spacing:0.3px;">3</div>
<div class="b" style="left:103px;top:730.5px;width:771px;height:1.5px;background:#c9c9c9"></div>
<div class="b" style="left:943.8px;top:576.3px;width:966.20px;height:485.70px;background:#fff;border:2px solid #b4b4b4;border-radius:7px"></div>
<svg class="a" style="left:968.00px;top:592.00px" width="30.4" height="30.4" viewBox="0 0 30 30"><circle cx="15" cy="15" r="15" fill="#9a9a9a"/><circle cx="15.5" cy="4.8" r="2.25" fill="#fff"/><path d="M11.1 9.7 H17.0 V25.1 H19.6 V27.0 H11.1 V25.1 H14.2 V11.8 H11.1 Z" fill="#fff"/></svg>
<svg class="a" style="left:0;top:0" width="1939" height="1082"><defs><linearGradient id="gs" x1="0" y1="690" x2="0" y2="977" gradientUnits="userSpaceOnUse"><stop offset="0" stop-color="#8ed8b5"/><stop offset="0.55" stop-color="#b5cec3"/><stop offset="1" stop-color="#f2f2f2"/></linearGradient><linearGradient id="gn" x1="0" y1="892" x2="0" y2="977" gradientUnits="userSpaceOnUse"><stop offset="0" stop-color="#b0453c" stop-opacity="0.9"/><stop offset="0.5" stop-color="#b07a78" stop-opacity="0.75"/><stop offset="1" stop-color="#f4f2f2" stop-opacity="0.9"/></linearGradient></defs><polygon points="1305.4,690.1 1344.7,693.0 1375.8,693.0 1414.2,693.0 1443.8,693.0 1485.2,696.6 1516.3,696.6 1555.2,888.2 1586.3,888.2 1625.8,917.9 1656.2,917.9 1695.6,895.9 1726.7,895.9 1765.5,884.9 1765.5,976 1305.4,976" fill="url(#gs)"/><polyline points="1305.4,690.1 1344.7,693.0 1375.8,693.0 1414.2,693.0 1443.8,693.0 1485.2,696.6 1516.3,696.6 1555.2,888.2 1586.3,888.2 1625.8,917.9 1656.2,917.9 1695.6,895.9 1726.7,895.9 1765.5,884.9" fill="none" stroke="#5bc89a" stroke-width="3.9" stroke-linejoin="round"/><polygon points="1305.4,892.4 1344.7,895.4 1375.8,895.4 1414.2,906.6 1443.8,906.6 1485.2,906.6 1516.3,906.6 1555.2,910.2 1586.3,910.2 1625.8,903.0 1656.2,903.0 1695.6,936.0 1726.7,936.0 1765.5,950.9 1765.5,976 1305.4,976" fill="url(#gn)"/><polyline points="1305.4,892.4 1344.7,895.4 1375.8,895.4 1414.2,906.6 1443.8,906.6 1485.2,906.6 1516.3,906.6 1555.2,910.2 1586.3,910.2 1625.8,903.0 1656.2,903.0 1695.6,936.0 1726.7,936.0 1765.5,950.9" fill="none" stroke="#b5170a" stroke-width="3.9" stroke-linejoin="round"/><path d="M1033.2 607.2 V976.7 H1766.5" fill="none" stroke="#b3b3b3" stroke-width="2.2"/><line x1="1025.2" y1="607.70" x2="1033.2" y2="607.70" stroke="#b3b3b3" stroke-width="2.2"/><line x1="1025.2" y1="663.11" x2="1033.2" y2="663.11" stroke="#b3b3b3" stroke-width="2.2"/><line x1="1025.2" y1="718.52" x2="1033.2" y2="718.52" stroke="#b3b3b3" stroke-width="2.2"/><line x1="1025.2" y1="773.93" x2="1033.2" y2="773.93" stroke="#b3b3b3" stroke-width="2.2"/><line x1="1025.2" y1="829.34" x2="1033.2" y2="829.34" stroke="#b3b3b3" stroke-width="2.2"/><line x1="1025.2" y1="884.75" x2="1033.2" y2="884.75" stroke="#b3b3b3" stroke-width="2.2"/><line x1="1025.2" y1="940.16" x2="1033.2" y2="940.16" stroke="#b3b3b3" stroke-width="2.2"/><line x1="1033.20" y1="972.2" x2="1033.20" y2="976.7" stroke="#b3b3b3" stroke-width="2.2"/><line x1="1124.70" y1="972.2" x2="1124.70" y2="976.7" stroke="#b3b3b3" stroke-width="2.2"/><line x1="1216.20" y1="972.2" x2="1216.20" y2="976.7" stroke="#b3b3b3" stroke-width="2.2"/><line x1="1307.70" y1="972.2" x2="1307.70" y2="976.7" stroke="#b3b3b3" stroke-width="2.2"/><line x1="1399.20" y1="972.2" x2="1399.20" y2="976.7" stroke="#b3b3b3" stroke-width="2.2"/><line x1="1490.70" y1="972.2" x2="1490.70" y2="976.7" stroke="#b3b3b3" stroke-width="2.2"/><line x1="1582.20" y1="972.2" x2="1582.20" y2="976.7" stroke="#b3b3b3" stroke-width="2.2"/><line x1="1673.70" y1="972.2" x2="1673.70" y2="976.7" stroke="#b3b3b3" stroke-width="2.2"/><line x1="1765.20" y1="972.2" x2="1765.20" y2="976.7" stroke="#b3b3b3" stroke-width="2.2"/></svg>
<div class="a" style="right:925.00px;top:597.93px;font-size:17.8px;line-height:22px;color:#aaaaaa;">0</div>
<div class="a" style="right:925.00px;top:653.34px;font-size:17.8px;line-height:22px;color:#aaaaaa;">-15</div>
<div class="a" style="right:925.00px;top:708.75px;font-size:17.8px;line-height:22px;color:#aaaaaa;">-30</div>
<div class="a" style="right:925.00px;top:764.16px;font-size:17.8px;line-height:22px;color:#aaaaaa;">-45</div>
<div class="a" style="right:925.00px;top:819.57px;font-size:17.8px;line-height:22px;color:#aaaaaa;">-60</div>
<div class="a" style="right:925.00px;top:874.98px;font-size:17.8px;line-height:22px;color:#aaaaaa;">-75</div>
<div class="a" style="right:925.00px;top:930.39px;font-size:17.8px;line-height:22px;color:#aaaaaa;">-90</div>
<div class="a" style="left:731.70px;width:600px;text-align:center;top:980.83px;font-size:17.8px;line-height:22px;color:#aaaaaa;">120</div>
<div class="a" style="left:823.20px;width:600px;text-align:center;top:980.83px;font-size:17.8px;line-height:22px;color:#aaaaaa;">105</div>
<div class="a" style="left:914.70px;width:600px;text-align:center;top:980.83px;font-size:17.8px;line-height:22px;color:#aaaaaa;">90</div>
<div class="a" style="left:1006.20px;width:600px;text-align:center;top:980.83px;font-size:17.8px;line-height:22px;color:#aaaaaa;">75</div>
<div class="a" style="left:1097.70px;width:600px;text-align:center;top:980.83px;font-size:17.8px;line-height:22px;color:#aaaaaa;">60</div>
<div class="a" style="left:1189.20px;width:600px;text-align:center;top:980.83px;font-size:17.8px;line-height:22px;color:#aaaaaa;">45</div>
<div class="a" style="left:1280.70px;width:600px;text-align:center;top:980.83px;font-size:17.8px;line-height:22px;color:#aaaaaa;">30</div>
<div class="a" style="left:1372.20px;width:600px;text-align:center;top:980.83px;font-size:17.8px;line-height:22px;color:#aaaaaa;">15</div>
<div class="a" style="left:1463.70px;width:600px;text-align:center;top:980.83px;font-size:17.8px;line-height:22px;color:#aaaaaa;">0</div>
<div class="a" style="left:1099.00px;width:600px;text-align:center;top:1002.16px;font-size:18.3px;line-height:23px;color:#a9a9a9;">Seconds</div>
<div class="a" style="left:954.5px;top:783px;width:60px;height:20px;line-height:20px;text-align:center;font-size:18px;color:#aaaaaa;transform:rotate(-90deg)">dBm</div>
<div class="a" style="left:1541.00px;width:600px;text-align:center;top:595.06px;font-size:59px;line-height:74px;color:#9a30d8;">18</div>
<div class="a" style="left:1541.00px;width:600px;text-align:center;top:655.87px;font-size:35px;line-height:44px;color:#9a30d8;">SNR</div>
<div class="a" style="left:1535.20px;width:600px;text-align:center;top:811.51px;font-size:37.5px;line-height:47px;color:#5cc99b;">-75</div>
<div class="a" style="left:1541.00px;width:600px;text-align:center;top:855.18px;font-size:24px;line-height:30px;color:#5cc99b;">Signal</div>
<div class="a" style="left:1535.20px;width:600px;text-align:center;top:900.51px;font-size:37.5px;line-height:47px;color:#b0180a;">-93</div>
<div class="a" style="left:1542.00px;width:600px;text-align:center;top:944.68px;font-size:24px;line-height:30px;color:#b0180a;">Noise</div>
</body></html>
